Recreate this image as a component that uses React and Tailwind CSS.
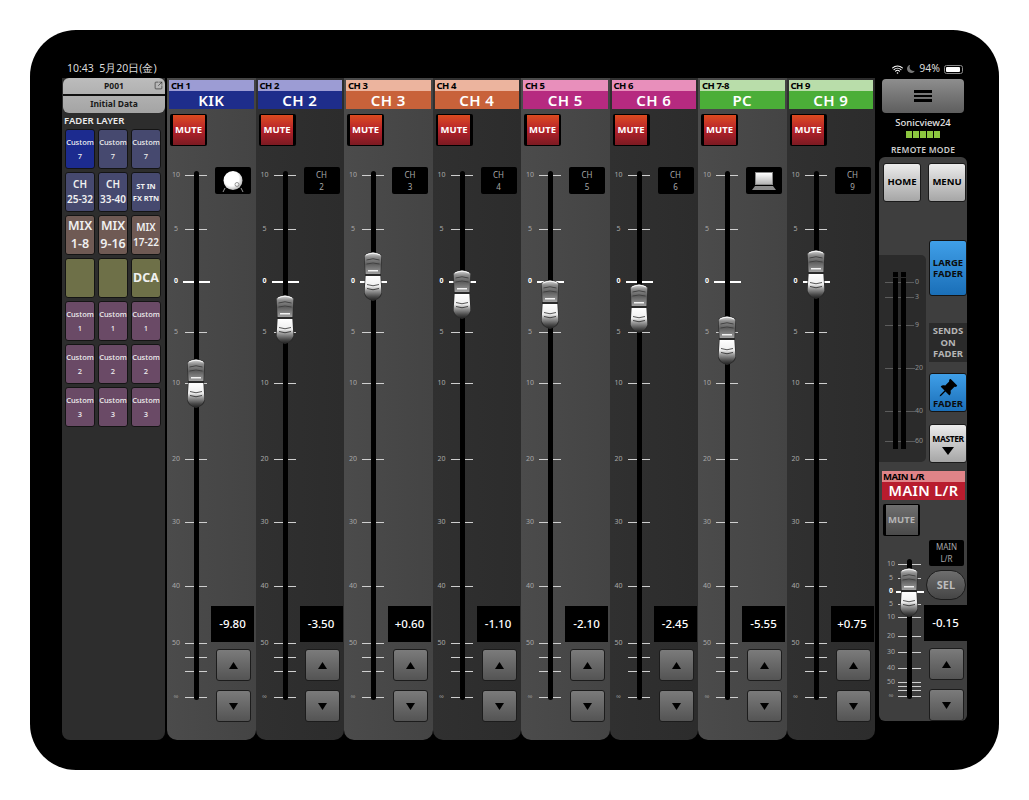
import { BsPinAngleFill, BsMoonFill } from "react-icons/bs";
import { IoWifi } from "react-icons/io5";
import { SquareArrowOutUpRight } from "lucide-react";

const font = "font-['Noto_Sans','Open_Sans',sans-serif]";

const scale = [
  { l: "10", y: 175 },
  { l: "5", y: 229 },
  { l: "0", y: 281, zero: true },
  { l: "5", y: 332 },
  { l: "10", y: 383 },
  { l: "20", y: 459 },
  { l: "30", y: 522 },
  { l: "40", y: 586 },
  { l: "50", y: 643 },
  { l: "", y: 657 },
  { l: "", y: 671 },
  { l: "∞", y: 697 },
];

const mainScale = [
  { l: "10", y: 565 },
  { l: "5", y: 579 },
  { l: "0", y: 592, zero: true },
  { l: "5", y: 605 },
  { l: "10", y: 618 },
  { l: "20", y: 637 },
  { l: "30", y: 653 },
  { l: "40", y: 669 },
  { l: "50", y: 683 },
  { l: "", y: 687 },
  { l: "", y: 691 },
  { l: "∞", y: 697 },
];

const blueCh = { sub: "bg-[#9c9cd4]", main: "bg-[#1e2d8b]" };
const orangeCh = { sub: "bg-[#ecb49e]", main: "bg-[#c8623a]" };
const pinkCh = { sub: "bg-[#e88fbb]", main: "bg-[#b62a80]" };
const greenCh = { sub: "bg-[#b9ddaa]", main: "bg-[#4bae38]" };

const channels = [
  { sub: "CH 1", name: "KIK", color: blueCh, knob: 382, value: "-9.80", icon: "drum", light: true },
  { sub: "CH 2", name: "CH 2", color: blueCh, knob: 318, value: "-3.50", tag: "2" },
  { sub: "CH 3", name: "CH 3", color: orangeCh, knob: 275, value: "+0.60", tag: "3", light: true },
  { sub: "CH 4", name: "CH 4", color: orangeCh, knob: 293, value: "-1.10", tag: "4" },
  { sub: "CH 5", name: "CH 5", color: pinkCh, knob: 303, value: "-2.10", tag: "5", light: true },
  { sub: "CH 6", name: "CH 6", color: pinkCh, knob: 307, value: "-2.45", tag: "6" },
  { sub: "CH 7-8", name: "PC", color: greenCh, knob: 339, value: "-5.55", icon: "laptop", light: true },
  { sub: "CH 9", name: "CH 9", color: greenCh, knob: 273, value: "+0.75", tag: "9" },
];

const SLATE = "bg-[#46496f]";
const MIX = "bg-[#6f5a54]";
const OLIVE = "bg-[#6e7048]";
const PLUM = "bg-[#6a4a66]";
const SMALL = "text-[7.5px] leading-[14px] font-medium";

const layers = [
  { top: "Custom", bottom: "7", color: "bg-[#1c2b8f]", text: SMALL },
  { top: "Custom", bottom: "7", color: SLATE, text: SMALL },
  { top: "Custom", bottom: "7", color: SLATE, text: SMALL },
  { top: "CH", bottom: "25-32", color: SLATE, text: "text-[10px] leading-[15px] font-semibold" },
  { top: "CH", bottom: "33-40", color: SLATE, text: "text-[10px] leading-[15px] font-semibold" },
  { top: "ST IN", bottom: "FX RTN", color: SLATE, text: "text-[7.5px] leading-[12px] font-bold" },
  { top: "MIX", bottom: "1-8", color: MIX, text: "text-[12.5px] leading-[18px] font-semibold" },
  { top: "MIX", bottom: "9-16", color: MIX, text: "text-[12.5px] leading-[18px] font-semibold" },
  { top: "MIX", bottom: "17-22", color: MIX, text: "text-[10px] leading-[15px] font-semibold" },
  { color: OLIVE },
  { color: OLIVE },
  { top: "DCA", color: OLIVE, text: "text-[12.5px] leading-[18px] font-bold" },
  { top: "Custom", bottom: "1", color: PLUM, text: SMALL },
  { top: "Custom", bottom: "1", color: PLUM, text: SMALL },
  { top: "Custom", bottom: "1", color: PLUM, text: SMALL },
  { top: "Custom", bottom: "2", color: PLUM, text: SMALL },
  { top: "Custom", bottom: "2", color: PLUM, text: SMALL },
  { top: "Custom", bottom: "2", color: PLUM, text: SMALL },
  { top: "Custom", bottom: "3", color: PLUM, text: SMALL },
  { top: "Custom", bottom: "3", color: PLUM, text: SMALL },
  { top: "Custom", bottom: "3", color: PLUM, text: SMALL },
];

const Knob = ({ id }) => (
  <svg width="20" height="52" viewBox="0 0 20 52">
    <defs>
      <linearGradient id={id + "t"} x1="0" y1="0" x2="0" y2="1">
        <stop offset="0" stopColor="#dcdcdc" />
        <stop offset="0.22" stopColor="#8c8c8c" />
        <stop offset="0.55" stopColor="#5f5f5f" />
        <stop offset="1" stopColor="#a0a0a0" />
      </linearGradient>
      <linearGradient id={id + "b"} x1="0" y1="0" x2="0" y2="1">
        <stop offset="0" stopColor="#ffffff" />
        <stop offset="0.42" stopColor="#eeeeee" />
        <stop offset="0.6" stopColor="#9a9a9a" />
        <stop offset="0.85" stopColor="#484848" />
        <stop offset="1" stopColor="#222222" />
      </linearGradient>
    </defs>
    <path d="M1 6 Q10 0 19 6 L18 26 L19 44 Q18 50 10 52 Q2 50 1 44 L2 26 Z" fill="#2a2a2a" />
    <path d="M1.6 6.4 Q10 0.8 18.4 6.4 L17.4 25 L2.6 25 Z" fill={`url(#${id}t)`} />
    <path d="M3 6 Q10 2.5 17 6" stroke="#f4f4f4" strokeWidth="1.2" fill="none" />
    <path d="M3.5 11 Q10 8.5 16.5 11" stroke="#3c3c3c" strokeWidth="0.9" fill="none" />
    <path d="M3.5 15 Q10 13 16.5 15" stroke="#3c3c3c" strokeWidth="0.9" fill="none" />
    <rect x="5" y="21" width="10" height="1.5" fill="#f2f2f2" />
    <path d="M2.6 27 L17.4 27 L18.4 44 Q16 50 10 51.4 Q4 50 1.6 44 Z" fill={`url(#${id}b)`} />
    <path d="M4 35.5 Q10 38 16 35.5" stroke="#444" strokeWidth="0.9" fill="none" />
    <path d="M4 39.5 Q10 42 16 39.5" stroke="#333" strokeWidth="0.9" fill="none" />
  </svg>
);

// ticks, track and cap of a fader; top is the page y of the column start
const Fader = ({ marks, top, tickX, tickW, labelX, trackX, trackFrom, trackTo, knob, knobX, id }) => (
  <>
    {marks.map((m, i) => (
      <div key={i}>
        {m.l && (
          <span
            className={`absolute w-[14px] text-center text-[7px] leading-[10px] ${m.zero ? "text-white font-bold" : "text-[#a8a8a8]"}`}
            style={{ top: m.y - top - 5, left: labelX - 7 }}
          >
            {m.l}
          </span>
        )}
        <div
          className={`absolute ${m.zero ? "h-[2px] bg-white" : "h-px bg-[#cfcfcf]"}`}
          style={{ top: m.y - top, left: m.zero ? tickX - 2 : tickX, width: m.zero ? tickW + 5 : tickW }}
        />
      </div>
    ))}
    <div
      className="absolute w-[5px] rounded-full bg-black"
      style={{ top: trackFrom - top, height: trackTo - trackFrom, left: trackX }}
    />
    <div className="absolute" style={{ top: knob - top - 26, left: knobX }}>
      <Knob id={id} />
    </div>
  </>
);

const StepButton = ({ down }) => (
  <div className="flex h-[32px] w-[35px] items-center justify-center rounded-[3px] border border-[#1c1c1c] bg-gradient-to-b from-[#7b7b7b] to-[#545454]">
    <svg width="9" height="7" viewBox="0 0 9 7">
      <polygon points={down ? "0,0 9,0 4.5,7" : "4.5,0 9,7 0,7"} fill="#000" />
    </svg>
  </div>
);

const ValueBox = ({ value }) => (
  <div className="flex h-[36px] w-[43px] items-center justify-center bg-black text-[11.5px] font-medium text-white">
    {value}
  </div>
);

const Mute = ({ off }) => (
  <div className="flex h-[32px] w-[37px] items-center justify-center rounded-[2px] bg-black">
    <div
      className={`flex h-[30px] w-[32px] items-center justify-center text-[9.5px] font-bold ${
        off
          ? "bg-gradient-to-b from-[#6f6f6f] to-[#4a4a4a] text-[#b4b4b4]"
          : "bg-gradient-to-b from-[#dc4a1e] via-[#b5212a] to-[#7c1a22] text-white"
      }`}
    >
      MUTE
    </div>
  </div>
);

const DrumIcon = () => (
  <svg width="26" height="24" viewBox="0 0 26 24">
    <defs>
      <radialGradient id="drumHead" cx="0.42" cy="0.4" r="0.7">
        <stop offset="0.55" stopColor="#ffffff" />
        <stop offset="1" stopColor="#9a9a9a" />
      </radialGradient>
    </defs>
    <path d="M5 19 L3 23 M21 19 L23 23" stroke="#999" strokeWidth="1" />
    <circle cx="13" cy="11.5" r="9.5" fill="url(#drumHead)" />
    <circle cx="17" cy="15.5" r="2" fill="none" stroke="#8a8a8a" strokeWidth="0.9" />
  </svg>
);

const LaptopIcon = () => (
  <svg width="24" height="20" viewBox="0 0 24 20">
    <defs>
      <linearGradient id="laptopScreen" x1="0" y1="0" x2="0" y2="1">
        <stop offset="0" stopColor="#ffffff" />
        <stop offset="1" stopColor="#b4b4b4" />
      </linearGradient>
    </defs>
    <rect x="3" y="1" width="18" height="13" fill="#888" />
    <rect x="4" y="2" width="16" height="11" fill="url(#laptopScreen)" />
    <polygon points="3,15 21,15 24,19 0,19" fill="#8b8b8b" />
  </svg>
);

const Strip = ({ ch, i }) => (
  <div
    className={`flex flex-1 flex-col rounded-b-[10px] pt-[2px] ${
      ch.light ? "bg-gradient-to-r from-[#4b4b4b] to-[#444444]" : "bg-gradient-to-r from-[#303030] to-[#2c2c2c]"
    }`}
  >
    <div className="mx-[2px]">
      <div className={`h-[11px] pl-[2px] text-[9.5px] leading-[11px] font-bold tracking-tighter text-black ${ch.color.sub}`}>
        {ch.sub}
      </div>
      <div className={`flex h-[18px] items-center justify-center text-[15px] font-semibold tracking-wide text-white ${ch.color.main}`}>
        {ch.name}
      </div>
    </div>
    <div className="mt-[5px] ml-[3px]">
      <Mute />
    </div>
    <div className="flex flex-1">
      <div className="relative w-[44px]">
        <Fader
          marks={scale}
          top={146}
          tickX={18}
          tickW={22}
          labelX={9}
          trackX={27}
          trackFrom={171}
          trackTo={700}
          knob={ch.knob}
          knobX={19}
          id={"k" + i}
        />
      </div>
      <div className="flex w-[44px] flex-col items-start pb-[18px]">
        <div className="mt-[21px] ml-[4px] flex h-[27px] w-[36px] flex-col items-center justify-center rounded-[2px] bg-black text-[8px] leading-[12px] text-[#a8a8a8]">
          {ch.icon === "drum" && <DrumIcon />}
          {ch.icon === "laptop" && <LaptopIcon />}
          {ch.tag && (
            <>
              <span>CH</span>
              <span>{ch.tag}</span>
            </>
          )}
        </div>
        <div className="mt-auto">
          <ValueBox value={ch.value} />
        </div>
        <div className="mt-[7px] ml-[5px]">
          <StepButton />
        </div>
        <div className="mt-[9px] ml-[5px]">
          <StepButton down />
        </div>
      </div>
    </div>
  </div>
);

const LeftPanel = () => (
  <div className="flex w-[103px] flex-col rounded-b-[8px] bg-[#2d2d2d]">
    <div className="relative ml-px flex h-[35px] flex-col rounded-[6px] bg-gradient-to-b from-[#bcbcbc] to-[#a4a4a4] text-center text-[8.5px] font-bold text-[#1a1a1a]">
      <div className="flex h-[18px] items-center justify-center border-b-2 border-[#111]">P001</div>
      <div className="flex flex-1 items-center justify-center">Initial Data</div>
      <SquareArrowOutUpRight className="absolute top-[3px] right-[2px] h-[9px] w-[9px] text-[#222]" strokeWidth={1.6} />
    </div>
    <div className="flex h-[16px] items-center pl-[2px] text-[9.5px] font-semibold text-[#ececec]">FADER LAYER</div>
    <div className="ml-[3px] grid w-[96px] grid-cols-[30px_30px_30px] gap-[3px]">
      {layers.map((b, i) => (
        <div
          key={i}
          className={`flex h-[40px] flex-col items-center justify-center rounded-[3px] border border-[#141414] text-[#f0f0f0] ${b.color} ${b.text || ""}`}
        >
          {b.top && <span>{b.top}</span>}
          {b.bottom && <span>{b.bottom}</span>}
        </div>
      ))}
    </div>
  </div>
);

const meterTicks = [
  { l: "0", y: 282 },
  { l: "3", y: 297 },
  { l: "9", y: 325 },
  { l: "20", y: 368 },
  { l: "40", y: 411 },
  { l: "60", y: 441 },
];

const Meter = () => (
  <div className="relative mt-[53px] mb-[6px] h-[207px] w-[47px] rounded-tr-[5px] rounded-br-[5px] bg-[#2b2b2b]">
    {meterTicks.map((t) => (
      <div key={t.l}>
        <div
          className="absolute left-[6px] h-px bg-[#5c5c5c]"
          style={{ top: t.y - 255, width: t.l.length > 1 ? 30 : 29 }}
        />
        <span
          className="absolute left-[36px] text-[7px] leading-[10px] text-[#8e8e8e]"
          style={{ top: t.y - 255 - 5 }}
        >
          {t.l}
        </span>
      </div>
    ))}
    <div className="absolute top-[17px] left-[14px] flex gap-[3px]">
      <div className="flex w-[5px] flex-col gap-px">
        <div className="h-[5px] bg-black" />
        <div className="h-[171px] bg-black" />
      </div>
      <div className="flex w-[5px] flex-col gap-px">
        <div className="h-[5px] bg-black" />
        <div className="h-[171px] bg-black" />
      </div>
    </div>
  </div>
);

const BLUE_BTN =
  "rounded-[3px] border border-[#141414] bg-gradient-to-b from-[#3f9fe8] to-[#1a6fb8] text-[#0c0c0c] font-bold";

const RightPanel = () => (
  <div className="flex w-[88px] flex-col">
    <div className="mx-[3px] mt-px flex h-[34px] flex-col items-center justify-center gap-[2px] rounded-[4px] bg-gradient-to-b from-[#8e8e8e] to-[#5e5e5e]">
      <div className="h-[2.5px] w-[18px] bg-black" />
      <div className="h-[2.5px] w-[18px] bg-black" />
      <div className="h-[2.5px] w-[18px] bg-black" />
    </div>
    <div className="mt-[3px] text-center text-[9.5px] leading-[14px] font-medium text-[#e4e4e4]">Sonicview24</div>
    <div className="mt-px flex justify-center gap-px">
      {[0, 1, 2, 3, 4].map((n) => (
        <div key={n} className="h-[7px] w-[6px] bg-[#8cc63f]" />
      ))}
    </div>
    <div className="flex h-[19px] items-center justify-center pt-[6px] text-[8.5px] font-semibold tracking-wide text-[#cccccc]">
      REMOTE MODE
    </div>
    <div className="flex flex-1 flex-col rounded-[6px] bg-[#3e3e3e]">
      <div className="flex gap-[7px] pt-[6px] pl-[4px]">
        {["HOME", "MENU"].map((t) => (
          <div
            key={t}
            className="flex h-[39px] w-[38px] items-center justify-center rounded-[3px] border border-[#1a1a1a] bg-gradient-to-b from-[#ececec] to-[#a6a6a6] text-[9.5px] font-bold text-black"
          >
            {t}
          </div>
        ))}
      </div>
      <div className="flex">
        <Meter />
        <div className="ml-[3px] flex w-[38px] flex-col">
          <div className={`mt-[38px] flex h-[56px] flex-col items-center justify-center text-[9.5px] leading-[11px] ${BLUE_BTN}`}>
            <span>LARGE</span>
            <span>FADER</span>
          </div>
          <div className="mt-[27px] flex h-[39px] flex-col items-center justify-center bg-[#2a2a2a] text-[9.5px] leading-[11.5px] font-bold text-[#b4b4b4]">
            <span>SENDS</span>
            <span>ON</span>
            <span>FADER</span>
          </div>
          <div className={`mt-[11px] flex h-[39px] flex-col items-center justify-end pb-px text-[9.5px] leading-[12px] ${BLUE_BTN}`}>
            <BsPinAngleFill className="h-[20px] w-[20px] text-black" />
            <span>FADER</span>
          </div>
          <div className="mt-[12px] flex h-[39px] flex-col items-center justify-center gap-[3px] rounded-[3px] border border-[#1a1a1a] bg-gradient-to-b from-[#ececec] to-[#a6a6a6] text-[8.5px] leading-[11px] font-bold tracking-tighter text-black">
            <span>MASTER</span>
            <svg width="12" height="8" viewBox="0 0 12 8">
              <polygon points="0,0 12,0 6,8" fill="#000" />
            </svg>
          </div>
        </div>
      </div>
      <div className="mx-[3px] mt-[3px] w-[83px]">
        <div className="h-[11px] bg-[#e08488] pl-px text-[9.5px] leading-[11px] font-bold tracking-tighter text-black">MAIN L/R</div>
        <div className="flex h-[18px] items-center justify-center bg-[#b81c2e] text-[14.5px] font-semibold tracking-wide text-white">
          MAIN L/R
        </div>
      </div>
      <div className="mt-[4px] ml-[4px]">
        <Mute off />
      </div>
      <div className="flex flex-1">
        <div className="relative w-[45px]">
          <Fader
            marks={mainScale}
            top={537}
            tickX={19}
            tickW={23}
            labelX={12}
            trackX={28}
            trackFrom={560}
            trackTo={700}
            knob={592}
            knobX={20}
            id="kmain"
          />
        </div>
        <div className="flex w-[43px] flex-col items-start">
          <div className="mt-[4px] ml-[5px] flex h-[26px] w-[35px] flex-col items-center justify-center rounded-[2px] bg-black text-[8px] leading-[12px] text-[#a8a8a8]">
            <span>MAIN</span>
            <span>L/R</span>
          </div>
          <div className="mt-[4px] ml-[2px] flex h-[30px] w-[40px] items-center justify-center rounded-full border border-[#1c1c1c] bg-gradient-to-b from-[#6e6e6e] to-[#454545] text-[11px] font-bold text-[#bcbcbc]">
            SEL
          </div>
          <div className="mt-[5px]">
            <ValueBox value="-0.15" />
          </div>
          <div className="mt-[7px] ml-[5px]">
            <StepButton />
          </div>
          <div className="mt-[9px] ml-[5px]">
            <StepButton down />
          </div>
        </div>
      </div>
    </div>
  </div>
);

const StatusBar = () => (
  <div className="flex h-[18px] items-center justify-between pr-[4px] pl-[5px] text-[10.5px] text-[#dcdcdc]">
    <span>10:43&nbsp;&nbsp;5月20日(金)</span>
    <div className="flex items-center gap-[3px]">
      <IoWifi className="h-[13px] w-[13px] text-white" />
      <BsMoonFill className="h-[8px] w-[8px] text-[#777777]" />
      <span className="ml-px">94%</span>
      <div className="ml-px flex h-[9px] w-[19px] items-center rounded-[2.5px] border border-[#8a8a8a] p-px">
        <div className="h-full w-[90%] rounded-[1px] bg-white" />
      </div>
    </div>
  </div>
);

export default function App() {
  return (
    <div className={`h-[800px] w-[1029px] bg-white pt-[30px] pl-[30px] ${font}`}>
      <div className="h-[740px] w-[969px] rounded-[46px] bg-black px-[32px] pt-[30px]">
        <StatusBar />
        <div className="flex h-[662px]">
          <LeftPanel />
          <div className="ml-[2px] flex w-[708px]">
            {channels.map((ch, i) => (
              <Strip key={i} ch={ch} i={i} />
            ))}
          </div>
          <div className="ml-[4px]">
            <RightPanel />
          </div>
        </div>
      </div>
    </div>
  );
}
